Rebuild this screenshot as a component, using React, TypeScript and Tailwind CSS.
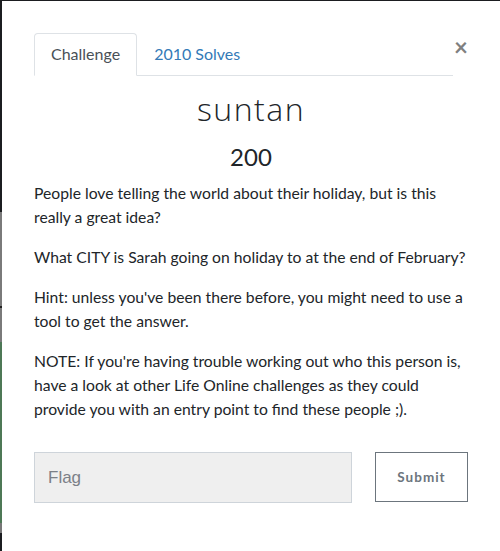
import React from "react";

export default function App() {
  return (
    <div className="flex w-[500px] h-[551px] overflow-hidden bg-white" style={{ fontFamily: "Lato, 'Noto Sans', sans-serif" }}>
      <div className="w-[2px] flex flex-col shrink-0">
        <div className="h-[212px] bg-[#1b1d20]" />
        <div className="h-[94px] bg-[#7a7a7a]" />
        <div className="h-[2px] bg-[#222]" />
        <div className="h-[34px] bg-[#7a7a7a]" />
        <div className="h-[181px] bg-[#4d7856]" />
        <div className="h-[10px] bg-[#777]" />
        <div className="flex-1 bg-[#1b1d20]" />
      </div>
      <div className="flex-1 flex flex-col">
        <div className="h-[1px] bg-[#1b1d20] shrink-0" />
        <div className="flex-1 bg-white pt-[32px] px-[32px]">
          <div className="flex items-start">
            <div className="flex-1 flex border-b border-[#dee2e6] text-[16px] leading-[24px]">
              <div className="px-4 py-2 border border-[#dee2e6] border-b-white rounded-t-[4px] text-[#495057] -mb-px bg-white">
                Challenge
              </div>
              <div className="px-4 py-2 border border-transparent text-[#337ab7]">2010 Solves</div>
            </div>
            <div className="w-[14px] ml-px text-[24px] leading-[24px] font-bold text-[#808080] pt-[2px] flex justify-center">
              ×
            </div>
          </div>
          <div
            className="text-center mt-[14px] text-[32px] leading-[38px] font-light tracking-[1.5px] text-[#212529]"
            style={{ fontFamily: "'Open Sans', Lato, sans-serif" }}
          >
            suntan
          </div>
          <div className="text-center mt-[14px] text-[24px] leading-[29px] text-[#212529]">200</div>
          <div className="mt-[10px] text-[15.7px] leading-[24px] text-[#212529]">
            <p className="mb-4">People love telling the world about their holiday, but is this really a great idea?</p>
            <p className="mb-4">What CITY is Sarah going on holiday to at the end of February?</p>
            <p className="mb-4">Hint: unless you've been there before, you might need to use a tool to get the answer.</p>
            <p>
              NOTE: If you're having trouble working out who this person is, have a look at other Life Online
              challenges as they could provide you with an entry point to find these people ;).
            </p>
          </div>
          <div className="flex items-start justify-between mt-[31px]">
            <input
              className="w-[318px] h-[51px] bg-[#efefef] border border-[#ced4da] px-[13px] text-[17px] text-[#495057] placeholder:text-[#7b8087] outline-none"
              style={{ fontFamily: "'Liberation Sans', Arial, sans-serif" }}
              placeholder="Flag"
            />
            <button className="w-[93px] h-[50px] border border-[#6c757d] bg-white text-[#6c757d] text-[13.5px] font-bold tracking-[1px]">
              Submit
            </button>
          </div>
        </div>
      </div>
    </div>
  );
}
